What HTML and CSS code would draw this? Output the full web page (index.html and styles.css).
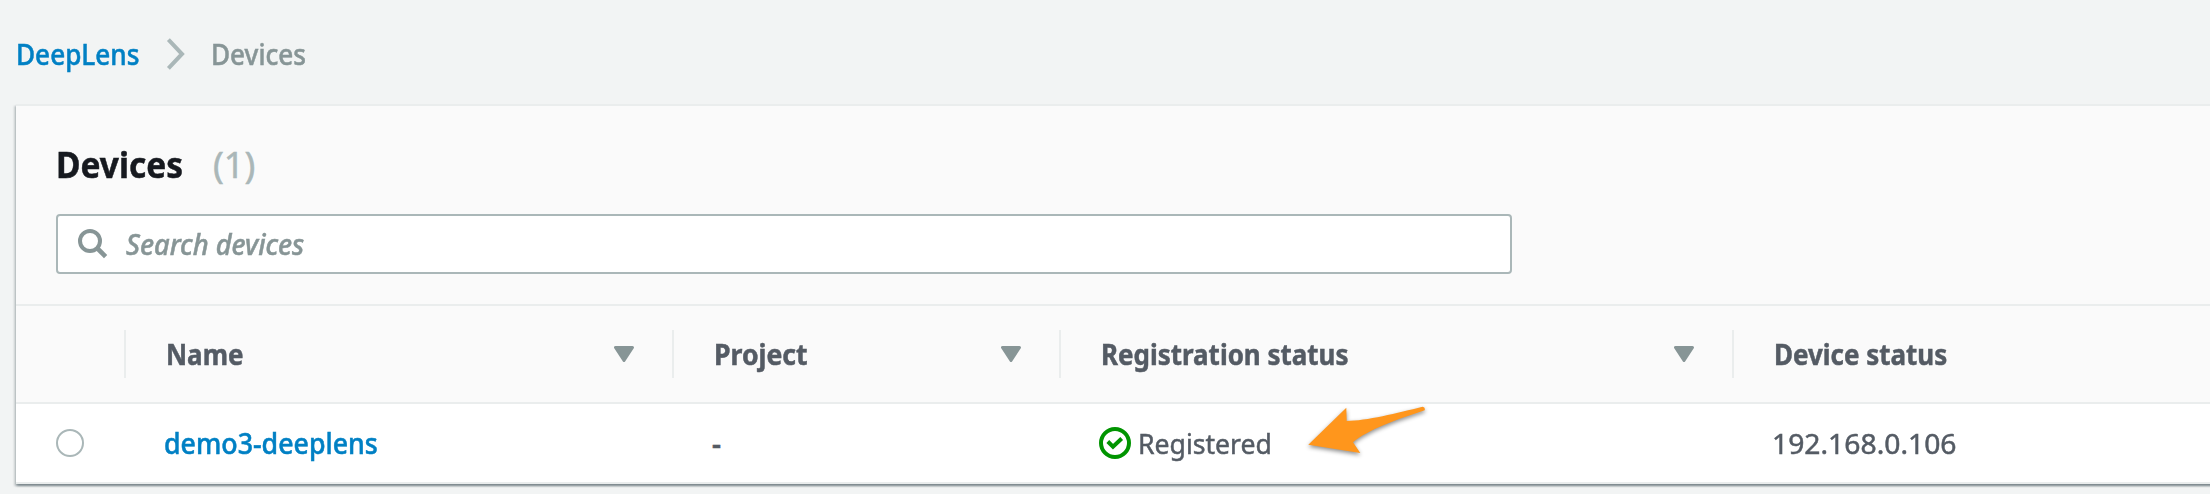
FILE: index.html
```html
<!DOCTYPE html>
<html lang="en">
<head>
<meta charset="utf-8">
<title>DeepLens Devices</title>
<link rel="stylesheet" href="styles.css">
</head>
<body>
<nav class="breadcrumb">
  <a class="crumb crumb-link" href="#">DeepLens</a>
  <svg class="chevron" width="20" height="32" viewBox="0 0 20 32"><path d="M2.4 1.7 16 16 2.4 30.3" fill="none" stroke="#aab7b8" stroke-width="4"/></svg>
  <span class="crumb crumb-current">Devices</span>
</nav>
<main class="panel">
  <header class="panel-header">
    <div class="heading"><h1 class="title">Devices</h1><span class="count">(1)</span></div>
    <div class="search">
      <svg class="search-icon" width="30" height="30" viewBox="0 0 30 30"><g fill="none" stroke="#879596" stroke-width="4"><circle cx="12" cy="12" r="10"/><path d="M19 19 27.6 27.6" stroke-width="4.6"/></g></svg>
      <span class="placeholder">Search devices</span>
    </div>
  </header>
  <div class="row row-head">
    <div class="cell cell-select"></div>
    <div class="cell"><span class="label">Name</span><svg class="sort" width="20" height="16" viewBox="0 0 20 16"><path d="M1.5 1.5h17L10 14.5z"/></svg></div>
    <div class="cell"><span class="label label-project">Project</span><svg class="sort" width="20" height="16" viewBox="0 0 20 16"><path d="M1.5 1.5h17L10 14.5z"/></svg></div>
    <div class="cell"><span class="label">Registration status</span><svg class="sort" width="20" height="16" viewBox="0 0 20 16"><path d="M1.5 1.5h17L10 14.5z"/></svg></div>
    <div class="cell"><span class="label">Device status</span><svg class="sort" width="20" height="16" viewBox="0 0 20 16"><path d="M1.5 1.5h17L10 14.5z"/></svg></div>
  </div>
  <div class="row row-body">
    <div class="cell cell-select"><span class="radio"></span></div>
    <div class="cell"><a class="device-link" href="#">demo3-deeplens</a></div>
    <div class="cell"><span class="dash">-</span></div>
    <div class="cell cell-status"><svg class="check" width="32" height="32" viewBox="0 0 32 32"><g fill="none" stroke="#009400" stroke-width="4"><circle cx="16" cy="16" r="14"/><path d="M8.8 14.5 14 19.7 22.7 11.5"/></g></svg><span class="registered">Registered</span></div>
    <div class="cell"><span class="address">192.168.0.106</span></div>
  </div>
</main>
<svg class="pointer" width="130" height="60" viewBox="0 0 130 60"><path d="M8.3 44.7 46.3 7.7 46.7 21C66 21 98 13 122.5 6.8Q125.5 7 124.7 10.2C98 19 67 30 53 42.3L60.3 53z" fill="#ff961c"/></svg>
</body>
</html>
```
FILE: styles.css
```css
* { box-sizing: border-box; }
html, body { margin: 0; height: 494px; overflow: hidden; }
body {
  position: relative;
  width: 2210px;
  background: #f2f4f4;
  color: #545b64;
  font: 28px/40px "Noto Sans", "Open Sans", sans-serif;
  -webkit-text-stroke: .5px currentColor;
}
a { text-decoration: none; color: #0080c4; }
svg { display: block; flex: none; }
.crumb, .title, .placeholder, .label, .device-link, .registered, .address, .dash {
  display: inline-block;
  transform-origin: 0 50%;
  white-space: nowrap;
}
.breadcrumb { display: flex; align-items: center; height: 104px; padding: 4px 0 0 16px; }
.crumb { transform: scaleX(.934); font-weight: 500; }
.crumb-link { width: 150px; }
.crumb-current { margin-left: 25px; color: #879596; }
.panel {
  width: 2300px;
  height: 380px;
  margin-left: 16px;
  border-top: 2px solid #eaeded;
  border-bottom: 2px solid #eaeded;
  background: #fff;
  box-shadow: 0 2px 2px rgba(0, 28, 36, .3), 2px 2px 2px rgba(0, 28, 36, .15), -2px 2px 2px rgba(0, 28, 36, .15);
}
.panel-header { height: 200px; padding: 34px 40px 0; background: #fafafa; border-bottom: 2px solid #eaeded; }
.heading { display: flex; align-items: center; height: 50px; margin-bottom: 24px; }
.title { width: 157px; margin: 0; color: #16191f; font-size: 36px; line-height: 50px; font-weight: 700; transform: scaleX(.93); }
.count { color: #aab7b8; font-size: 36px; line-height: 50px; }
.search { display: flex; align-items: center; width: 1456px; height: 60px; padding-left: 20px; border: 2px solid #aab7b8; border-radius: 4px; background: #fff; }
.placeholder { margin-left: 18px; color: #879596; font-style: italic; font-weight: 500; transform: scaleX(.972); }
.row { display: grid; grid-template-columns: 108px 548px 387px 673px 536px; }
.row-head { grid-template-columns: 110px 548px 387px 673px 536px; height: 98px; align-items: center; background: #fafafa; border-bottom: 2px solid #eaeded; font-weight: 700; }
.row-head .cell { display: flex; align-items: center; justify-content: space-between; height: 48px; padding: 0 40px; border-right: 2px solid #eaeded; }
.cell { white-space: nowrap; padding-left: 40px; }
.label { transform: scaleX(.927); }
.label-project { transform: scaleX(.95); }
.row-head .sort { margin-right: -2px; }
.sort path { fill: #879596; stroke: #879596; stroke-width: 3; stroke-linejoin: round; }
.row-body { height: 78px; align-items: center; }
.radio { display: block; width: 28px; height: 28px; border: 2px solid #aab7b8; border-radius: 50%; background: #fff; }
.device-link { font-weight: 500; transform: scaleX(.956); }
.cell-status { display: flex; align-items: center; }
.registered { margin-left: 7px; transform: scaleX(.95); }
.address { transform: scaleX(1.01); }
.dash { font-weight: 600; }
.pointer { position: absolute; left: 1300px; top: 400px; filter: drop-shadow(0 2px 2px rgba(0, 0, 0, .45)); }
```
